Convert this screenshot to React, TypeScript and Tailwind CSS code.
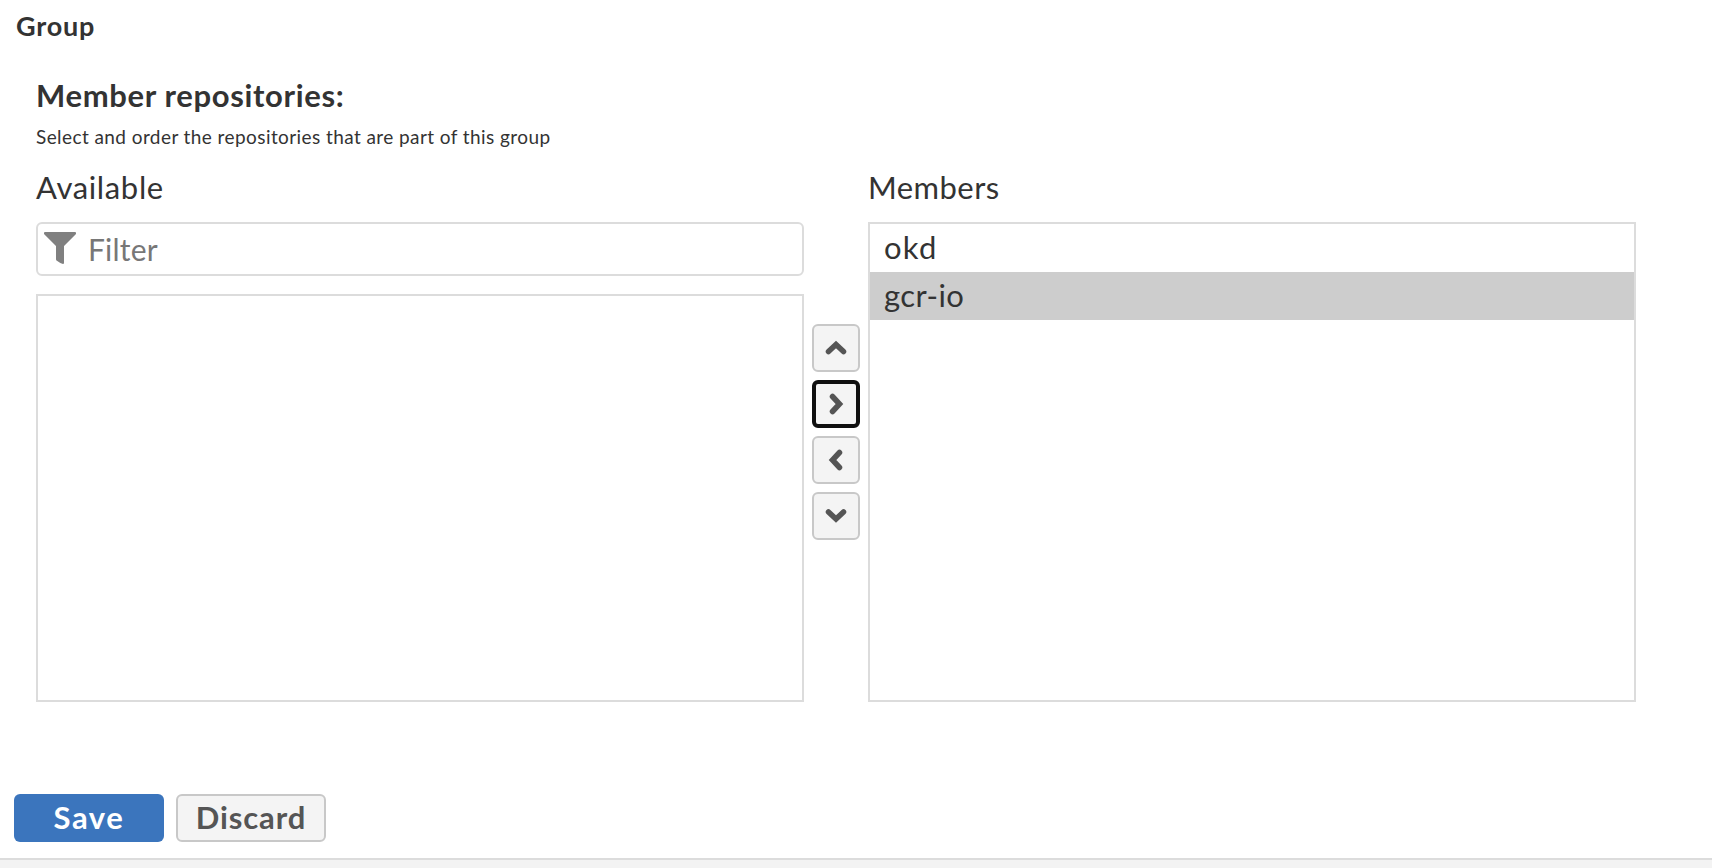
import type { ReactNode } from "react";

const members = [
  { name: "okd", selected: false, spacing: "tracking-[1.2px]" },
  { name: "gcr-io", selected: true, spacing: "tracking-[0.4px]" },
];

const moves = [
  { label: "Move up", d: "M16.500 27.500 L24 20.500 L31.500 27.500", focused: false },
  { label: "Add", d: "M20.500 16.500 L27.500 24 L20.500 31.500", focused: true },
  { label: "Remove", d: "M27.500 16.500 L20.500 24 L27.500 31.500", focused: false },
  { label: "Move down", d: "M16.500 20 L24 27 L31.500 20", focused: false },
];

function MoveButton({ d, label, focused }: { d: string; label: string; focused: boolean }) {
  return (
    <button
      aria-label={label}
      className={
        focused
          ? "flex size-12 items-center justify-center rounded-md border-4 border-[#101010] bg-[#f4f4f4]"
          : "flex size-12 items-center justify-center rounded-md border-2 border-[#c8c8c8] bg-[#f4f4f4]"
      }
    >
      <svg viewBox="0 0 48 48" className="size-12 shrink-0" fill="none" stroke="#555" strokeWidth="5.5">
        <path d={d} strokeLinecap="round" strokeLinejoin="miter" />
      </svg>
    </button>
  );
}

function ColumnTitle({ children }: { children: ReactNode }) {
  return <h3 className="mb-[15px] h-10 whitespace-nowrap text-[31px] leading-[41px]">{children}</h3>;
}

export default function App() {
  return (
    <div className="flex h-[868px] w-[1712px] flex-col overflow-hidden bg-white font-['Lato',sans-serif] text-[#333]">
      <h1 className="ml-4 mt-1.5 h-10 text-[27px] font-bold leading-10 tracking-[0.8px]">Group</h1>
      <section className="ml-9 mt-7 w-[1600px]">
        <h2 className="h-10 text-[31px] font-bold leading-[42px] tracking-[0.65px]">
          <span>Member repositories:</span>
        </h2>
        <p className="mt-2 h-[30px] text-[19px] leading-[30px] tracking-[0.42px]">
          <span>Select and order the repositories that are part of this group</span>
        </p>
        <div className="mt-[15px] flex">
          <div className="w-[768px]">
            <ColumnTitle><span className="tracking-[0.65px]">Available</span></ColumnTitle>
            <label className="flex h-[54px] items-center rounded-md border-2 border-[#dcdcdc] pl-1.5">
              <svg viewBox="0 0 32 32" className="mb-0.5 size-8" fill="#808080">
                <path d="M1 0H31Q32 0 32 1V2L20 14V31Q20 32 19 32Q16.500 31.500 12.500 28.500Q12 28 12 27V14L0 2V1Q0 0 1 0Z" />
              </svg>
              <span className="ml-3 text-[30px] leading-10 tracking-[0.2px] text-[#777]">Filter</span>
            </label>
            <div className="mt-[18px] h-[408px] border-2 border-[#dcdcdc]" />
          </div>
          <div className="flex w-16 flex-col items-center gap-2 pt-[157px]">
            {moves.map((m) => (
              <MoveButton key={m.label} {...m} />
            ))}
          </div>
          <div className="w-[768px]">
            <ColumnTitle><span className="tracking-[0.45px]">Members</span></ColumnTitle>
            <ul className="h-[480px] border-2 border-[#dcdcdc]">
              {members.map((m) => (
                <li
                  key={m.name}
                  className={
                    m.selected
                      ? "h-12 bg-[#cdcdcd] pl-3.5 text-[31px] leading-[46px]"
                      : "h-12 pl-3.5 text-[31px] leading-[46px]"
                  }
                >
                  <span className={m.spacing}>{m.name}</span>
                </li>
              ))}
            </ul>
          </div>
        </div>
      </section>
      <div className="ml-3.5 mt-[92px] flex gap-3">
        <button className="h-12 w-[150px] rounded-md bg-[#3b75bd] pb-[3px] text-[31px] font-bold leading-10 tracking-[1.6px] text-white">
          <span>Save</span>
        </button>
        <button className="h-12 w-[150px] rounded-md border-2 border-[#c8c8c8] bg-[#f4f4f4] pb-[3px] text-[31px] font-bold leading-10 tracking-[0.9px] text-[#555]">
          <span>Discard</span>
        </button>
      </div>
      <footer className="mt-4 h-2.5 border-t-2 border-[#dcdcdc] bg-[#f3f3f3]" />
    </div>
  );
}
